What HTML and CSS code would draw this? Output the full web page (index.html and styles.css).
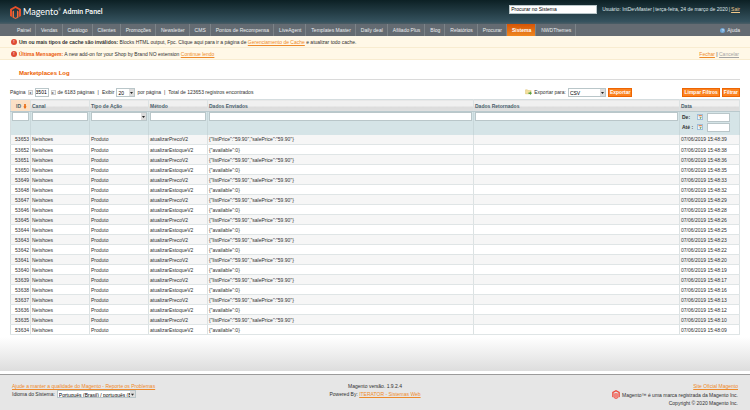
FILE: index.html
```html
<!DOCTYPE html>
<html lang="pt-BR">

<head>
    <meta charset="UTF-8">
    <title>Marketplaces Log / Magento Admin</title>
    <link rel="stylesheet" href="styles.css">
</head>

<body>
    <header class="header">
        <a class="logo" href="#">
            <svg class="logo-mark" viewBox="0 0 22 26" aria-hidden="true">
                <path fill="#e8502a" d="M11 0 22 6v14l-4 2V8l-7-4-7 4v14l-4-2V6z" />
                <path fill="#f26c3a" d="M8 9v13l3 2 3-2V9l3 2v12l-6 3-6-3V11z" />
            </svg>
            <span class="logo-name">Magento<sup>®</sup></span>
            <span class="logo-panel">Admin Panel</span>
        </a>
        <div class="header-right">
            <input class="search" type="text" value="Procurar no Sistema" aria-label="Procurar no Sistema">
            <span>Usuário: IntDevMaster</span><i>|</i><span>terça-feira, 24 de março de 2020</span><i>|</i><a href="#">Sair</a>
        </div>
    </header>

    <nav class="nav">
        <a href="#">Painel</a>
        <a href="#">Vendas</a>
        <a href="#">Catálogo</a>
        <a href="#">Clientes</a>
        <a href="#">Promoções</a>
        <a href="#">Newsletter</a>
        <a href="#">CMS</a>
        <a href="#">Pontos de Recompensa</a>
        <a href="#">LiveAgent</a>
        <a href="#">Templates Master</a>
        <a href="#">Daily deal</a>
        <a href="#">Afiliado Plus</a>
        <a href="#">Blog</a>
        <a href="#">Relatórios</a>
        <a href="#">Procurar</a>
        <a class="active" href="#">Sistema</a>
        <a href="#">NWDThemes</a>
        <a class="help" href="#"><span class="help-icon">?</span>Ajuda</a>
    </nav>

    <div class="message">
        <span class="alert">!</span>
        <p><strong>Um ou mais tipos de cache são inválidos:</strong> Blocks HTML output, Fpc. Clique aqui para ir a página de <a href="#">Gerenciamento de Cache</a> e atualizar todo cache.</p>
    </div>
    <div class="message">
        <span class="alert">!</span>
        <p><strong class="orange">Última Mensagem:</strong> A new add-on for your Shop by Brand NO extension <a href="#">Continue lendo</a></p>
        <p class="message-links"><a href="#">Fechar</a> | <a class="muted" href="#">Cancelar</a></p>
    </div>

    <main class="content">
        <h1>Marketplaces Log</h1>

        <div class="toolbar">
            <div class="pager">
                <label for="page">Página</label>
                <button class="arrow" type="button" aria-label="Anterior">◂</button>
                <input id="page" class="page" type="text" value="3501">
                <button class="arrow" type="button" aria-label="Próxima">▸</button>
                <span>de 6183 páginas</span>
                <i>|</i>
                <label for="limit">Exibir</label>
                <select id="limit" class="limit"><option>20</option></select>
                <span>por página</span>
                <i>|</i>
                <span>Total de 123653 registros encontrados</span>
            </div>
            <div class="export">
                <svg class="export-icon" viewBox="0 0 18 16" aria-hidden="true">
                    <path fill="#f3df9c" stroke="#d3b860" d="M1 2h5l2 2h8v9H1z" />
                    <path fill="#55a043" d="M9 9h4V6l5 5-5 5v-3H9z" />
                </svg>
                <label for="format">Exportar para:</label>
                <select id="format" class="format"><option>CSV</option></select>
                <button class="btn" type="button">Exportar</button>
            </div>
            <div class="filters">
                <button class="btn" type="button">Limpar Filtros</button>
                <button class="btn" type="button">Filtrar</button>
            </div>
        </div>

        <table class="grid">
            <colgroup>
                <col class="c-id">
                <col class="c-std">
                <col class="c-std">
                <col class="c-std">
                <col>
                <col class="c-ret">
                <col class="c-date">
            </colgroup>
            <thead>
                <tr class="headings">
                    <th class="sorted">ID <svg class="sort" viewBox="0 0 4 6" aria-hidden="true"><path fill="#ea6a10" d="M1 0h2v3h1L2 6 0 3h1z" /></svg></th>
                    <th>Canal</th>
                    <th>Tipo de Ação</th>
                    <th>Método</th>
                    <th>Dados Enviados</th>
                    <th>Dados Retornados</th>
                    <th>Data</th>
                </tr>
                <tr class="filter">
                    <td><input type="text" aria-label="ID"></td>
                    <td><input type="text" aria-label="Canal"></td>
                    <td><select aria-label="Tipo de Ação"><option></option></select></td>
                    <td><input type="text" aria-label="Método"></td>
                    <td><input type="text" aria-label="Dados Enviados"></td>
                    <td><input type="text" aria-label="Dados Retornados"></td>
                    <td>
                        <div class="range">
                            <label for="from">De:</label>
                            <svg class="cal" viewBox="0 0 16 16" aria-hidden="true"><path fill="#eef5fb" stroke="#7ba7d0" stroke-width="2" d="M1 1h14v14H1z" /><path fill="#e07b3c" d="M4 3h9v3H4z" /><path fill="#7ea870" d="M7 8h5v2l-3 4H7l2-4H7z" /></svg>
                            <input id="from" type="text">
                        </div>
                        <div class="range">
                            <label for="to">Até :</label>
                            <svg class="cal" viewBox="0 0 16 16" aria-hidden="true"><path fill="#eef5fb" stroke="#7ba7d0" stroke-width="2" d="M1 1h14v14H1z" /><path fill="#e07b3c" d="M4 3h9v3H4z" /><path fill="#7ea870" d="M7 8h5v2l-3 4H7l2-4H7z" /></svg>
                            <input id="to" type="text">
                        </div>
                    </td>
                </tr>
            </thead>
            <tbody>
                <tr><td>53653</td><td>Netshoes</td><td>Produto</td><td>atualizarPrecoV2</td><td>{"listPrice":"59.90","salePrice":"59.90"}</td><td></td><td>07/06/2019 15:48:39</td></tr>
                <tr><td>53652</td><td>Netshoes</td><td>Produto</td><td>atualizarEstoqueV2</td><td>{"available":0}</td><td></td><td>07/06/2019 15:48:38</td></tr>
                <tr><td>53651</td><td>Netshoes</td><td>Produto</td><td>atualizarPrecoV2</td><td>{"listPrice":"59.90","salePrice":"59.90"}</td><td></td><td>07/06/2019 15:48:36</td></tr>
                <tr><td>53650</td><td>Netshoes</td><td>Produto</td><td>atualizarEstoqueV2</td><td>{"available":0}</td><td></td><td>07/06/2019 15:48:35</td></tr>
                <tr><td>53649</td><td>Netshoes</td><td>Produto</td><td>atualizarPrecoV2</td><td>{"listPrice":"59.90","salePrice":"59.90"}</td><td></td><td>07/06/2019 15:48:33</td></tr>
                <tr><td>53648</td><td>Netshoes</td><td>Produto</td><td>atualizarEstoqueV2</td><td>{"available":0}</td><td></td><td>07/06/2019 15:48:32</td></tr>
                <tr><td>53647</td><td>Netshoes</td><td>Produto</td><td>atualizarPrecoV2</td><td>{"listPrice":"59.90","salePrice":"59.90"}</td><td></td><td>07/06/2019 15:48:29</td></tr>
                <tr><td>53646</td><td>Netshoes</td><td>Produto</td><td>atualizarEstoqueV2</td><td>{"available":0}</td><td></td><td>07/06/2019 15:48:28</td></tr>
                <tr><td>53645</td><td>Netshoes</td><td>Produto</td><td>atualizarPrecoV2</td><td>{"listPrice":"59.90","salePrice":"59.90"}</td><td></td><td>07/06/2019 15:48:26</td></tr>
                <tr><td>53644</td><td>Netshoes</td><td>Produto</td><td>atualizarEstoqueV2</td><td>{"available":0}</td><td></td><td>07/06/2019 15:48:25</td></tr>
                <tr><td>53643</td><td>Netshoes</td><td>Produto</td><td>atualizarPrecoV2</td><td>{"listPrice":"59.90","salePrice":"59.90"}</td><td></td><td>07/06/2019 15:48:23</td></tr>
                <tr><td>53642</td><td>Netshoes</td><td>Produto</td><td>atualizarEstoqueV2</td><td>{"available":0}</td><td></td><td>07/06/2019 15:48:22</td></tr>
                <tr><td>53641</td><td>Netshoes</td><td>Produto</td><td>atualizarPrecoV2</td><td>{"listPrice":"59.90","salePrice":"59.90"}</td><td></td><td>07/06/2019 15:48:20</td></tr>
                <tr><td>53640</td><td>Netshoes</td><td>Produto</td><td>atualizarEstoqueV2</td><td>{"available":0}</td><td></td><td>07/06/2019 15:48:19</td></tr>
                <tr><td>53639</td><td>Netshoes</td><td>Produto</td><td>atualizarPrecoV2</td><td>{"listPrice":"59.90","salePrice":"59.90"}</td><td></td><td>07/06/2019 15:48:17</td></tr>
                <tr><td>53638</td><td>Netshoes</td><td>Produto</td><td>atualizarEstoqueV2</td><td>{"available":0}</td><td></td><td>07/06/2019 15:48:16</td></tr>
                <tr><td>53637</td><td>Netshoes</td><td>Produto</td><td>atualizarPrecoV2</td><td>{"listPrice":"59.90","salePrice":"59.90"}</td><td></td><td>07/06/2019 15:48:13</td></tr>
                <tr><td>53636</td><td>Netshoes</td><td>Produto</td><td>atualizarEstoqueV2</td><td>{"available":0}</td><td></td><td>07/06/2019 15:48:12</td></tr>
                <tr><td>53635</td><td>Netshoes</td><td>Produto</td><td>atualizarPrecoV2</td><td>{"listPrice":"59.90","salePrice":"59.90"}</td><td></td><td>07/06/2019 15:48:10</td></tr>
                <tr><td>53634</td><td>Netshoes</td><td>Produto</td><td>atualizarEstoqueV2</td><td>{"available":0}</td><td></td><td>07/06/2019 15:48:09</td></tr>
            </tbody>
        </table>
    </main>

    <footer class="footer">
        <div>
            <p><a href="#">Ajude a manter a qualidade do Magento - Reporte os Problemas</a></p>
            <p class="locale">
                <label for="locale">Idioma do Sistema:</label>
                <select id="locale"><option>Português (Brasil) / português (Brasil)</option></select>
            </p>
        </div>
        <div class="footer-center">
            <p>Magento versão. 1.9.2.4</p>
            <p>Powered By: <a href="#">ITERATOR - Sistemas Web</a></p>
        </div>
        <div class="footer-right">
            <p><a href="#">Site Oficial Magento</a></p>
            <p class="legal">
                <svg class="footer-mark" viewBox="0 0 22 26" aria-hidden="true">
                    <path fill="#ee4a3c" d="M11 0 22 6v14l-4 2V8l-7-4-7 4v14l-4-2V6z" />
                    <path fill="#ee4a3c" d="M7 9v13l4 2 4-2V9l2 2v12l-6 3-6-3V11z" />
                    <path fill="#f3827a" d="M8 9h6v13l-3 2-3-2z" />
                </svg>
                Magento™ é uma marca registrada da Magento Inc.
            </p>
            <p>Copyright © 2020 Magento Inc.</p>
        </div>
    </footer>
</body>

</html>
```

FILE: styles.css
```css
* {
    box-sizing: border-box;
}

body {
    display: flex;
    flex-direction: column;
    min-height: 100vh;
    margin: 0;
    background: #fff;
    color: #2f2f2f;
    font: 5px/8px "Liberation Sans", Arial, sans-serif;
}

p,
h1 {
    margin: 0;
}

a {
    color: #ee8a2a;
}

i {
    font-style: normal;
}

input,
select,
button {
    margin: 0;
    font: inherit;
}

input,
select {
    height: 9px;
    padding: 0 1px;
    border: 1px solid #b9c6c9;
    border-radius: 0;
    background-color: #fff;
    color: #000;
}

select {
    appearance: none;
    padding-right: 5px;
    background-image: url("data:image/svg+xml,%3Csvg xmlns='http://www.w3.org/2000/svg' viewBox='0 0 5 7'%3E%3Cpath fill='%23dcdcdc' d='M0 0h5v7H0z'/%3E%3Cpath fill='%23222' d='M1 3h3L2.500 5z'/%3E%3C/svg%3E");
    background-position: right center;
    background-size: 5px 7px;
    background-repeat: no-repeat;
}

/* Header */
.header {
    display: flex;
    justify-content: space-between;
    align-items: center;
    height: 24px;
    padding: 0 10px;
    background: linear-gradient(#0c2024, #35525e 90%, #4b5d66);
    color: #dfe6e8;
}

.logo {
    display: flex;
    align-items: center;
    gap: 2px;
    color: #fff;
    text-decoration: none;
}

.logo-mark {
    width: 11px;
    height: 13px;
}

.logo-name {
    font: 9px/12px Lato, sans-serif;
}

.logo-name sup {
    font-size: 3px;
    line-height: 1px;
}

.logo-panel {
    font: 500 7px/12px Roboto, sans-serif;
}

.header-right {
    display: flex;
    align-items: center;
    gap: 1px;
    padding-bottom: 6px;
}

.header-right a {
    color: #f1c88b;
}

.search {
    width: 88px;
    margin-right: 4px;
}

/* Menu */
.nav {
    display: flex;
    height: 12px;
    padding: 0 10px 0 12px;
    background: #646b72;
    line-height: 12px;
}

.nav a {
    padding: 0 4px 0 5px;
    border-right: 1px solid #7c8388;
    color: #e9ecee;
    text-decoration: none;
}

.nav .active {
    background: linear-gradient(#d65405, #ef8720);
    color: #fff;
    font-weight: bold;
}

.nav .help {
    display: flex;
    align-items: center;
    gap: 2px;
    margin-left: auto;
    padding: 0;
    border: 0;
}

.help-icon {
    width: 5px;
    height: 5px;
    border-radius: 50%;
    background: #6fa6d6;
    color: #fff;
    font-size: 4px;
    line-height: 5px;
    text-align: center;
}

/* Messages */
.message {
    display: flex;
    align-items: center;
    gap: 2px;
    height: 12px;
    padding: 0 11px;
    border-bottom: 1px solid #f8ecd0;
    background: #fff8e7;
}

.alert {
    width: 6px;
    height: 6px;
    border-radius: 50%;
    background: #df4a33;
    color: #fff;
    font-size: 4px;
    font-weight: bold;
    line-height: 6px;
    text-align: center;
}

.orange {
    color: #ea5b0c;
}

.message-links {
    margin-left: auto;
}

.muted {
    color: #a5a5a5;
}

/* Content */
.content {
    flex: 1;
    padding: 8px 10px 36px;
    background: linear-gradient(#ddd0, #ddd) bottom / 100% 34px no-repeat;
}

h1 {
    padding: 0 9px 1px;
    border-bottom: 1px solid #dadada;
    color: #eb5e00;
    font-size: 6px;
    line-height: 10px;
}

.toolbar {
    display: flex;
    align-items: center;
    height: 19px;
    padding-top: 5px;
}

.pager,
.export,
.filters {
    display: flex;
    align-items: center;
    gap: 2px;
}

.arrow {
    width: 5px;
    height: 5px;
    padding: 0;
    border: 1px solid #ccc;
    background: #f5f5f5;
    color: #555;
    font-size: 4px;
    line-height: 3px;
}

.page {
    width: 14px;
    padding: 0;
}

.pager i {
    padding: 0 1px;
}

.limit {
    width: 19px;
}

.export {
    margin-left: auto;
}

.export-icon {
    width: 7px;
    height: 6px;
}

.format {
    width: 38px;
}

.filters {
    margin-left: 50px;
}

.btn {
    height: 9px;
    padding: 0 1px;
    border: 1px solid #ed6502;
    background: #fb8220;
    color: #fff;
    font-weight: bold;
    line-height: 7px;
}

/* Grid */
.grid {
    width: 100%;
    table-layout: fixed;
    border: 1px solid #d5dddf;
    border-collapse: collapse;
}

.c-id {
    width: 20px;
}

.c-std {
    width: 59px;
}

.c-ret {
    width: 206px;
}

.c-date {
    width: 60px;
}

.grid th,
.grid td {
    overflow: hidden;
    padding: 0 1px;
    border-right: 1px solid #dce2e3;
    text-align: left;
    white-space: nowrap;
}

.headings th {
    height: 12px;
    border-bottom: 1px solid #b9c9cd;
    background: linear-gradient(#f0f0f0 50%, #dbdbdb 60%, #e0e0e0);
    color: #49606b;
}

.headings .sorted {
    padding: 0 1px 0 5px;
    background: #fbe0c6;
}

.sort {
    width: 4px;
    height: 5px;
    margin-left: 1px;
    vertical-align: middle;
}

.grid .filter td {
    height: 23px;
    padding: 0 1px;
    border-color: #c8d7da;
    background: #d5e4e7;
    vertical-align: top;
}

.filter td > input,
.filter td > select {
    display: block;
    width: 100%;
}

.range {
    display: flex;
    align-items: center;
    height: 10px;
    padding-left: 1px;
}

.range label {
    width: 15px;
    font-weight: bold;
}

.range input {
    width: 23px;
    margin-left: 4px;
}

.cal {
    width: 6px;
    height: 6px;
}

.grid tbody td {
    height: 10px;
    border-bottom: 1px solid #dfe5e6;
}

.grid tbody td:first-child {
    text-align: right;
}

.grid tbody tr:nth-child(odd) {
    background: #f6f6f6;
}

/* Footer */
.footer {
    display: grid;
    grid-template-columns: 1fr 1fr 1fr;
    margin-top: 3px;
    padding: 7px 12px 4px;
    border-top: 1px solid #9b9b9b;
    background: #e6e6e6;
}

.locale,
.legal {
    display: flex;
    align-items: center;
    gap: 2px;
}

.locale select {
    width: 79px;
    height: 8px;
}

.footer-center {
    text-align: center;
}

.footer-right {
    text-align: right;
}

.legal {
    justify-content: flex-end;
}

.footer-mark {
    width: 8px;
    height: 9px;
}
```
